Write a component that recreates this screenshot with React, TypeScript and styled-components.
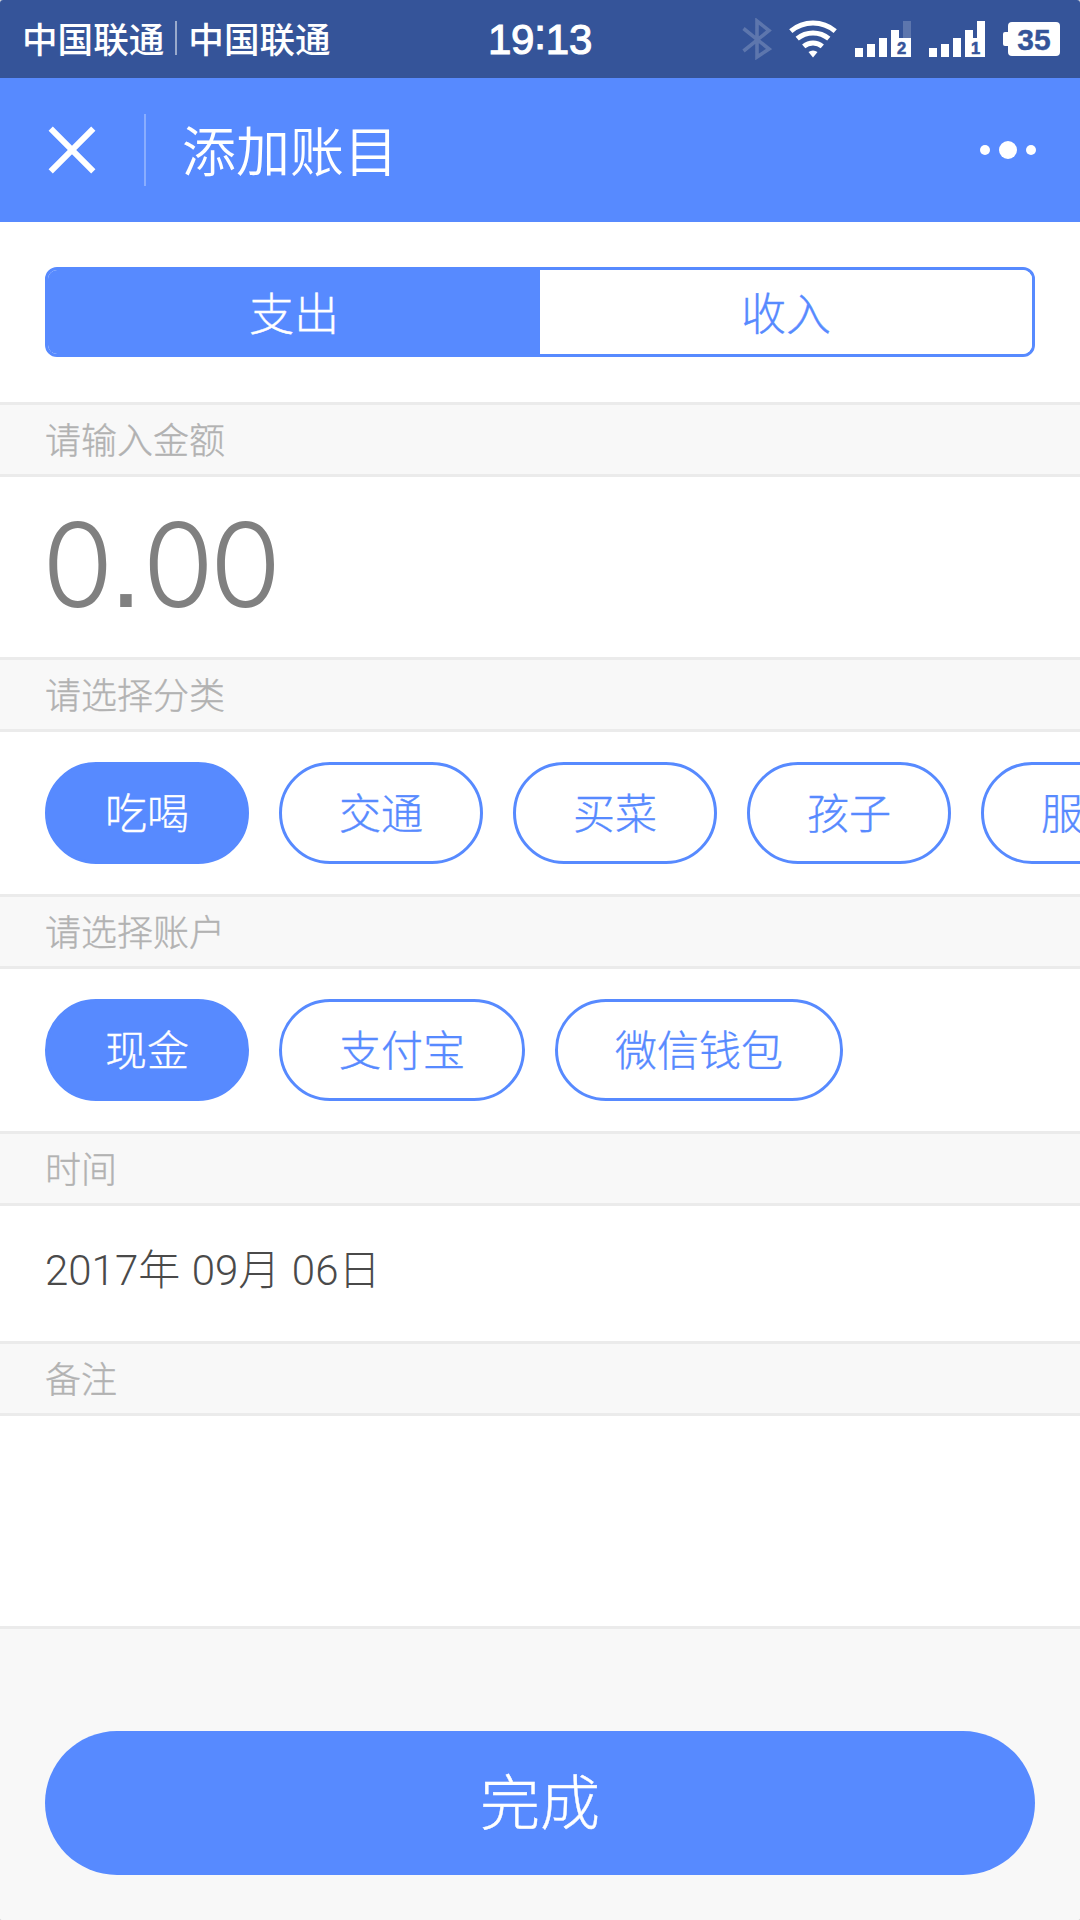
import React, { useState } from "react";
import styled, { createGlobalStyle } from "styled-components";

const blue = "#578aff";
const navy = "#355499";
const cjk = `"Noto Sans CJK SC", sans-serif`;

const GlobalStyle = createGlobalStyle`
  * { box-sizing: border-box; }
  body { margin: 0; background: #d8d8d8; }
  button, input, textarea { font: inherit; margin: 0; }
`;

const Screen = styled.div`
  display: flex;
  flex-direction: column;
  width: 1080px;
  height: 1920px;
  overflow: hidden;
  border-radius: 3px;
  background: #fff;
  font-family: "Liberation Sans", ${cjk};
  font-weight: 300;
`;

const StatusBar = styled.div`
  display: grid;
  grid-template-columns: 1fr auto 1fr;
  align-items: center;
  height: 78px;
  padding: 0 20px 0 22px;
  background: ${navy};
  color: #fff;
  flex: none;
`;

const Carriers = styled.div`
  display: flex;
  align-items: center;
  font: 500 35.6px/52px ${cjk};
  gap: 11px;
`;

const CarrierName = styled.span`
  padding-bottom: 3px;
`;

const CarrierRule = styled.span`
  width: 2px;
  height: 34px;
  margin-bottom: 2px;
  background: rgba(255, 255, 255, 0.5);
`;

const Clock = styled.div`
  display: flex;
  font: 400 42px/48px "Liberation Sans", sans-serif;
  letter-spacing: -0.2px;
  -webkit-text-stroke: 1.1px #fff;
  padding: 2px 2px 0 0;
`;

const Colon = styled.span`
  margin-top: -5px;
`;

const StatusIcons = styled.div`
  display: flex;
  justify-content: flex-end;
  align-items: center;
`;

const StatusSvg = styled.svg<{ $gap: number }>`
  display: block;
  flex: none;
  margin-left: ${(p) => p.$gap}px;
`;

const Header = styled.header`
  display: flex;
  align-items: center;
  flex: none;
  height: 144px;
  background: ${blue};
  color: #fff;
`;

const IconButton = styled.button`
  display: flex;
  align-items: center;
  justify-content: center;
  width: 144px;
  height: 144px;
  padding: 0;
  border: 0;
  background: none;
  color: inherit;
`;

const HeaderRule = styled.span`
  width: 2px;
  height: 72px;
  background: rgba(255, 255, 255, 0.3);
`;

const Title = styled.h1`
  flex: 1;
  margin: 0 0 0 36px;
  padding-bottom: 3px;
  font: 350 54px/78px ${cjk};
`;

const SegmentRow = styled.div`
  flex: none;
  padding: 45px;
`;

const Segmented = styled.div`
  display: flex;
  height: 90px;
  border: 3px solid ${blue};
  border-radius: 12px;
`;

const Segment = styled.button<{ $active: boolean }>`
  flex: 1;
  padding: 0 0 1px;
  border: 0;
  border-radius: ${(p) => (p.$active ? "9px 0 0 9px" : "0 9px 9px 0")};
  background: ${(p) => (p.$active ? blue : "#fff")};
  color: ${(p) => (p.$active ? "#fff" : blue)};
  font: 300 45px/83px ${cjk};
  -webkit-text-stroke: 0.35px currentColor;
`;

const Label = styled.h2`
  flex: none;
  height: 75px;
  margin: 0;
  padding: 0 45px;
  border: solid #ebebeb;
  border-width: 3px 0;
  background: #f8f8f8;
  color: #b2b2b2;
  font: 300 36px/66px ${cjk};
  -webkit-text-stroke: 0.35px currentColor;
`;

const Amount = styled.div`
  display: flex;
  align-items: baseline;
  flex: none;
  height: 180px;
  padding: 18px 0 0 42px;
  color: #808080;
  font: 300 116px/140px Inter, sans-serif;
  letter-spacing: -4.4px;
`;

const Point = styled.span`
  font: 400 120px/140px "Liberation Sans", sans-serif;
  letter-spacing: 0;
`;

const ChipRow = styled.div`
  display: flex;
  flex: none;
  align-items: center;
  gap: 30px;
  height: 162px;
  padding: 0 45px;
  overflow: hidden;
`;

const Chip = styled.button<{ $active: boolean }>`
  flex: none;
  height: 102px;
  padding: 0 57px 4px;
  border: 3px solid ${blue};
  border-radius: 51px;
  background: ${(p) => (p.$active ? blue : "#fff")};
  color: ${(p) => (p.$active ? "#fff" : blue)};
  font: 300 42px/92px ${cjk};
  -webkit-text-stroke: 0.35px currentColor;
`;

const DateRow = styled.div`
  flex: none;
  height: 135px;
  padding: 0 45px;
  color: #4a4a4a;
  font: 300 42px/129px Roboto, ${cjk};
  word-spacing: 1.3px;
`;

const Memo = styled.textarea`
  display: block;
  flex: none;
  width: 100%;
  height: 213px;
  padding: 30px 45px;
  border: 0;
  border-bottom: 3px solid #ebebeb;
  outline: 0;
  resize: none;
  background: #fff;
`;

const Footer = styled.footer`
  flex: 1;
  padding: 102px 45px 45px;
  background: #f8f8f8;
`;

const DoneButton = styled.button`
  display: block;
  width: 100%;
  height: 144px;
  padding: 0 0 9px;
  border: 0;
  border-radius: 72px;
  background: ${blue};
  color: #fff;
  font: 300 60px/135px ${cjk};
  -webkit-text-stroke: 0.4px currentColor;
`;

function Signal({ sim, gap, dim }: { sim: string; gap: number; dim?: boolean }) {
  return (
    <StatusSvg $gap={gap} width="56" height="36" viewBox="0 0 56 36">
      <path fill="#fff" d="M0 27h8v9H0zM12 23h8v13h-8zM24 17h8v19h-8zM36 9h8v8h12v19H36z" />
      <path fill="#fff" opacity={dim ? 0.2 : 1} d="M48 0h8v17h-8z" />
      <text x="46.5" y="33" textAnchor="middle" fill={navy} stroke={navy} strokeWidth="0.6"
        fontFamily="Liberation Sans" fontWeight="700" fontSize="16.5">{sim}</text>
    </StatusSvg>
  );
}

export default function App() {
  const [kind, setKind] = useState("支出");
  const [category, setCategory] = useState("吃喝");
  const [account, setAccount] = useState("现金");

  return (
    <>
      <GlobalStyle />
      <Screen>
        <StatusBar>
          <Carriers>
            <CarrierName>中国联通</CarrierName>
            <CarrierRule />
            <CarrierName>中国联通</CarrierName>
          </Carriers>
          <Clock>19<Colon>:</Colon>13</Clock>
          <StatusIcons>
            <StatusSvg $gap={0} width="30" height="42" viewBox="0 0 30 42">
              <path d="M1.5 10.5L27 31 15 39V3l12 9.5L1.5 33" fill="none" stroke="#fff" strokeWidth="3.6" opacity="0.2" />
            </StatusSvg>
            <StatusSvg $gap={17} width="48" height="38" viewBox="0 0 48 38">
              <g fill="none" stroke="#fff" strokeWidth="5">
                <path d="M1.8 11.1a34.5 34.5 0 0 1 44.4 0" />
                <path d="M8.2 18.7a24.5 24.5 0 0 1 31.6 0" />
                <path d="M14.7 26.4a14.5 14.5 0 0 1 18.6 0" />
              </g>
              <path fill="#fff" d="M24 37.5l-4.5-5.4a7 7 0 0 1 9 0z" />
            </StatusSvg>
            <Signal sim="2" gap={18} dim />
            <Signal sim="1" gap={18} />
            <StatusSvg $gap={18} width="57" height="34" viewBox="0 0 57 34">
              <rect x="5" width="52" height="34" rx="4" fill="#fff" />
              <rect y="10" width="8" height="14" rx="2" fill="#fff" />
              <text x="31" y="28" textAnchor="middle" fill={navy} stroke={navy} strokeWidth="0.4"
                fontFamily="Liberation Sans" fontWeight="700" fontSize="30">35</text>
            </StatusSvg>
          </StatusIcons>
        </StatusBar>

        <Header>
          <IconButton aria-label="关闭">
            <svg width="48" height="48" viewBox="0 0 48 48">
              <path d="M2.7 2.7l42.6 42.6M45.3 2.7L2.7 45.3" stroke="#fff" strokeWidth="6" />
            </svg>
          </IconButton>
          <HeaderRule />
          <Title>添加账目</Title>
          <IconButton aria-label="更多">
            <svg width="56" height="18" viewBox="0 0 56 18" fill="#fff">
              <circle cx="5" cy="9" r="5" />
              <circle cx="28" cy="9" r="9" />
              <circle cx="51" cy="9" r="5" />
            </svg>
          </IconButton>
        </Header>

        <SegmentRow>
          <Segmented>
            {["支出", "收入"].map((k) => (
              <Segment key={k} $active={k === kind} onClick={() => setKind(k)}>{k}</Segment>
            ))}
          </Segmented>
        </SegmentRow>

        <Label>请输入金额</Label>
        <Amount>0<Point>.</Point>00</Amount>

        <Label>请选择分类</Label>
        <ChipRow>
          {["吃喝", "交通", "买菜", "孩子", "服饰"].map((c) => (
            <Chip key={c} $active={c === category} onClick={() => setCategory(c)}>{c}</Chip>
          ))}
        </ChipRow>

        <Label>请选择账户</Label>
        <ChipRow>
          {["现金", "支付宝", "微信钱包"].map((a) => (
            <Chip key={a} $active={a === account} onClick={() => setAccount(a)}>{a}</Chip>
          ))}
        </ChipRow>

        <Label>时间</Label>
        <DateRow>2017年 09月 06日</DateRow>

        <Label>备注</Label>
        <Memo aria-label="备注" />

        <Footer>
          <DoneButton>完成</DoneButton>
        </Footer>
      </Screen>
    </>
  );
}
